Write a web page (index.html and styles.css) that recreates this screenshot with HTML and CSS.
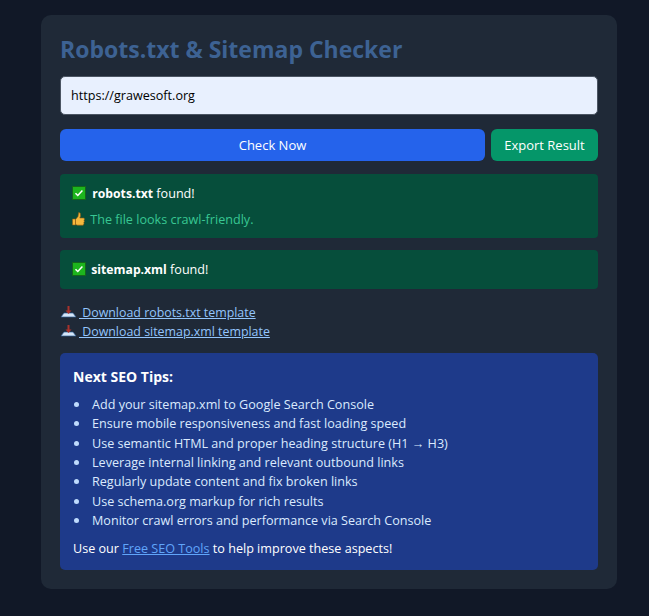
FILE: index.html
```html
<!DOCTYPE html>
<html lang="en">
<head>
    <meta charset="UTF-8">
    <meta name="viewport" content="width=device-width, initial-scale=1.0">
    <title>Robots.txt & Sitemap Checker</title>
    <link rel="stylesheet" href="styles.css">
</head>
<body>
    <div class="container">
        <h1>Robots.txt &amp; Sitemap Checker</h1>

        <input type="text" class="url-input" value="https://grawesoft.org">

        <div class="actions">
            <button class="check-btn">Check Now</button>
            <button class="export-btn">Export Result</button>
        </div>

        <div class="result result-robots">
            <p>
                <svg class="icon check-icon" viewBox="0 0 14 14"><rect x="0.5" y="0.5" width="13" height="13" fill="#1db51d" stroke="#14661a"/><path d="M3.5 7.2l2.3 2.3 4.6-5" fill="none" stroke="#fff" stroke-width="1.5"/></svg>
                <strong>robots.txt</strong> found!
            </p>
            <p class="friendly">
                <svg class="icon thumb-icon" viewBox="0 0 13 14"><path d="M0.5 7h3v6h-3zM3.5 7.5l2.5-3 .7-4 1.5.5.3 3-.7 2h4.2l.5 1.2-.5 1.2.4 1-.6 1 .2 1-.8 1.8H5.5l-2-.7z" fill="#f5b83d" stroke="#8a5a14" stroke-width="0.6"/></svg>
                The file looks crawl-friendly.
            </p>
        </div>

        <div class="result">
            <p>
                <svg class="icon check-icon tight" viewBox="0 0 14 14"><rect x="0.5" y="0.5" width="13" height="13" fill="#1db51d" stroke="#14661a"/><path d="M3.5 7.2l2.3 2.3 4.6-5" fill="none" stroke="#fff" stroke-width="1.5"/></svg>
                <strong>sitemap.xml</strong> found!
            </p>
        </div>

        <div class="downloads">
            <a href="#"><svg class="icon dl-icon" viewBox="0 0 17 12"><path d="M1 11l3-4h9l3 4z" fill="#d5e6f8" stroke="#2f5f96" stroke-width="0.7"/><path d="M8.5 0v6" stroke="#a8322c" stroke-width="2"/><path d="M5.5 4.5h6l-3 3.5z" fill="#a8322c"/></svg> Download robots.txt template</a>
            <a href="#"><svg class="icon dl-icon" viewBox="0 0 17 12"><path d="M1 11l3-4h9l3 4z" fill="#d5e6f8" stroke="#2f5f96" stroke-width="0.7"/><path d="M8.5 0v6" stroke="#a8322c" stroke-width="2"/><path d="M5.5 4.5h6l-3 3.5z" fill="#a8322c"/></svg> Download sitemap.xml template</a>
        </div>

        <div class="tips">
            <h2>Next SEO Tips:</h2>
            <ul>
                <li>Add your sitemap.xml to Google Search Console</li>
                <li>Ensure mobile responsiveness and fast loading speed</li>
                <li>Use semantic HTML and proper heading structure (H1 → H3)</li>
                <li>Leverage internal linking and relevant outbound links</li>
                <li>Regularly update content and fix broken links</li>
                <li>Use schema.org markup for rich results</li>
                <li>Monitor crawl errors and performance via Search Console</li>
            </ul>
            <p>Use our <a href="#">Free SEO Tools</a> to help improve these aspects!</p>
        </div>
    </div>
</body>
</html>
```

FILE: styles.css
```css
body {
    font-family: "Open Sans", sans-serif;
    font-size: 12.6px;
    background: #111827;
    color: #fff;
    margin: 0;
    padding: 15px 32px 27px 41px;
}

p {
    margin: 0;
}

.container {
    background: #1f2937;
    padding: 19px;
    border-radius: 10px;
}

h1 {
    font-size: 23px;
    line-height: 31px;
    font-weight: 700;
    color: #3d6293;
    margin: 0 0 11px;
}

.url-input {
    display: block;
    width: 100%;
    box-sizing: border-box;
    height: 39px;
    padding: 0 10px;
    background: #e8f0fe;
    color: #000;
    border: 1px solid #4b5563;
    border-radius: 5px;
    font-family: inherit;
    font-size: 12.6px;
}

.actions {
    display: flex;
    gap: 6px;
    margin-top: 14px;
}

.actions button {
    height: 32px;
    color: #fff;
    border: none;
    border-radius: 6px;
    font-family: inherit;
    font-size: 13px;
}

.check-btn {
    flex: 1;
    background: #2563eb;
}

.export-btn {
    width: 107px;
    background: #059669;
}

.result {
    background: #064e3b;
    border-radius: 4px;
    padding: 10px 12px;
    margin-top: 12px;
    line-height: 19px;
}

.result strong {
    font-size: 12.2px;
}

.result-robots {
    margin-top: 13px;
    padding-bottom: 9px;
}

.friendly {
    color: #38c793;
    margin-top: 7px;
}

.icon {
    vertical-align: -2px;
}

.check-icon {
    width: 14px;
    height: 14px;
    margin-right: 3px;
}

.check-icon.tight {
    margin-right: 2px;
}

.thumb-icon {
    width: 13px;
    height: 14px;
    margin-right: 2px;
}

.dl-icon {
    width: 17px;
    height: 12px;
    margin-right: 2px;
    vertical-align: -1px;
}

.downloads {
    margin-top: 14px;
    line-height: 19px;
    font-size: 12.4px;
}

.downloads a {
    display: block;
    color: #93c5fd;
}

.tips {
    background: #1e3a8a;
    border-radius: 5px;
    padding: 13px 13px 12px;
    margin-top: 12px;
    color: #dbeafe;
}

.tips h2 {
    font-size: 14px;
    line-height: 22px;
    font-weight: 700;
    color: #fff;
    margin: 0 0 7px;
}

.tips ul {
    list-style: none;
    margin: 0;
    padding-left: 19px;
    line-height: 19.33px;
}

.tips li::before {
    content: "";
    display: inline-block;
    width: 5px;
    height: 5px;
    border-radius: 50%;
    background: #bfdbfe;
    margin-left: -18.5px;
    margin-right: 13.5px;
    vertical-align: 2px;
}

.tips p {
    color: #fff;
    margin-top: 9px;
    line-height: 19px;
}

.tips a {
    color: #60a5fa;
}
```
